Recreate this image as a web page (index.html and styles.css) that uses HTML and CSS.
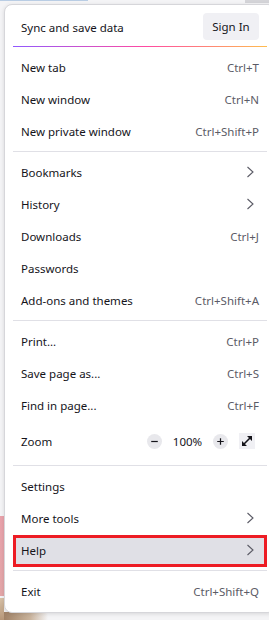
FILE: index.html
```html
<!DOCTYPE html>
<html>
<head>
<meta charset="utf-8">
<link rel="stylesheet" href="styles.css">
</head>
<body>
<div class="panel">
  <div class="sync">
    <span class="sync-title">Sync and save data</span>
    <button class="signin">Sign In</button>
  </div>
  <div class="grad"></div>
  <div class="group">
    <div class="item"><span class="label">New tab</span><span class="key">Ctrl+T</span></div>
    <div class="item"><span class="label">New window</span><span class="key">Ctrl+N</span></div>
    <div class="item"><span class="label">New private window</span><span class="key">Ctrl+Shift+P</span></div>
  </div>
  <div class="sep"></div>
  <div class="group">
    <div class="item"><span class="label">Bookmarks</span><svg class="chev" viewBox="0 0 16 16"><path d="M4.5 3 L10 8 L4.5 13"/></svg></div>
    <div class="item"><span class="label">History</span><svg class="chev" viewBox="0 0 16 16"><path d="M4.5 3 L10 8 L4.5 13"/></svg></div>
    <div class="item"><span class="label">Downloads</span><span class="key">Ctrl+J</span></div>
    <div class="item"><span class="label">Passwords</span></div>
    <div class="item"><span class="label">Add-ons and themes</span><span class="key">Ctrl+Shift+A</span></div>
  </div>
  <div class="sep"></div>
  <div class="group">
    <div class="item"><span class="label">Print...</span><span class="key">Ctrl+P</span></div>
    <div class="item"><span class="label">Save page as...</span><span class="key">Ctrl+S</span></div>
    <div class="item"><span class="label">Find in page...</span><span class="key">Ctrl+F</span></div>
    <div class="item zoom">
      <span class="label">Zoom</span>
      <div class="zoom-ctrls">
        <span class="zbtn"><svg viewBox="0 0 16 16"><path d="M4.5 8 H11.5"/></svg></span>
        <span class="zval">100%</span>
        <span class="zbtn"><svg viewBox="0 0 16 16"><path d="M4.5 8 H11.5 M8 4.5 V11.5"/></svg></span>
        <span class="zfull"><svg viewBox="0 0 16 16"><path class="arr" d="M4 12 L12 4"/><path class="head" d="M8 3 H13 V8 Z M3 8 V13 H8 Z"/></svg></span>
      </div>
    </div>
  </div>
  <div class="sep"></div>
  <div class="group">
    <div class="item"><span class="label">Settings</span></div>
    <div class="item"><span class="label">More tools</span><svg class="chev" viewBox="0 0 16 16"><path d="M4.5 3 L10 8 L4.5 13"/></svg></div>
    <div class="item active"><span class="label">Help</span><svg class="chev" viewBox="0 0 16 16"><path d="M4.5 3 L10 8 L4.5 13"/></svg></div>
  </div>
  <div class="sep"></div>
  <div class="group">
    <div class="item"><span class="label">Exit</span><span class="key">Ctrl+Shift+Q</span></div>
  </div>
</div>
</body>
</html>
```
FILE: styles.css
```css
html, body {
  margin: 0;
  padding: 0;
  overflow: hidden;
  height: 620px;
}
body {
  font-family: "Noto Sans", "Liberation Sans", sans-serif;
  font-size: 11.5px;
  color: #15141a;
  background-color: #f4f4f6;
  background-image:
    linear-gradient(90deg, #b9cde4 0, #b9cde4 88px, transparent 88px),
    linear-gradient(90deg, transparent 245px, #d4d4d8 245px),
    linear-gradient(180deg, #e9a2ab 0, #e3a6a8 100%),
    linear-gradient(180deg, #d8c2a8 0, #b69678 100%),
    linear-gradient(90deg, #9a7a5e 0, #c9b39c 30px, #f4f4f6 48px);
  background-size: 269px 1px, 269px 3px, 4px 80px, 4px 22px, 269px 8px;
  background-position: 0 0, 0 0, 0 516px, 0 598px, 0 612px;
  background-repeat: no-repeat;
}
.panel {
  box-sizing: border-box;
  width: 272px;
  margin: 4px 0 0 4px;
  padding: 0 8px 4px;
  background: #fff;
  border: 1px solid #d6d6da;
  border-radius: 8px;
  box-shadow: 0 1px 4px rgba(0, 0, 0, 0.12);
}
.sync {
  display: flex;
  align-items: center;
  justify-content: space-between;
  padding: 8px 8px 6px;
}
.sync-title {
  margin-top: 2px;
}
.signin {
  font-family: inherit;
  font-size: 11.5px;
  color: #15141a;
  background: #f0f0f4;
  border: none;
  border-radius: 4px;
  height: 27px;
  width: 56px;
  padding: 0;
}
.grad {
  height: 1px;
  background: linear-gradient(90deg, #9059ff 0%, #ff4aa2 52%, #ffbd4f 100%);
  margin-bottom: 5px;
}
.sep {
  height: 1px;
  background: #e0e0e6;
  margin: 3px 0 5px;
}
.item {
  box-sizing: border-box;
  display: flex;
  align-items: center;
  justify-content: space-between;
  height: 32px;
  padding: 0 8px 2px;
  border-radius: 4px;
}
.key {
  color: #5b5b66;
}
.chev {
  width: 16px;
  height: 16px;
  fill: none;
  stroke: #5b5b66;
  stroke-width: 1.1;
}
.active {
  background: #e0e0e6;
  box-shadow: inset 0 0 0 3px #ed1c24;
  border-radius: 0;
}
.zoom {
  height: 40px;
  padding-right: 12px;
}
.zoom-ctrls {
  display: flex;
  align-items: center;
}
.zbtn {
  display: flex;
  width: 15px;
  height: 15px;
  border-radius: 50%;
  background: #e8e8ec;
  align-items: center;
  justify-content: center;
}
.zbtn svg {
  width: 15px;
  height: 15px;
  fill: none;
  stroke: #15141a;
  stroke-width: 1.3;
}
.zval {
  width: 51px;
  text-align: center;
}
.zfull {
  display: flex;
  width: 16px;
  height: 16px;
  margin-left: 11px;
  background: #f0f0f4;
  align-items: center;
  justify-content: center;
}
.zfull svg {
  width: 16px;
  height: 16px;
}
.zfull .arr {
  stroke: #15141a;
  stroke-width: 1.6;
}
.zfull .head {
  fill: #15141a;
}
```
